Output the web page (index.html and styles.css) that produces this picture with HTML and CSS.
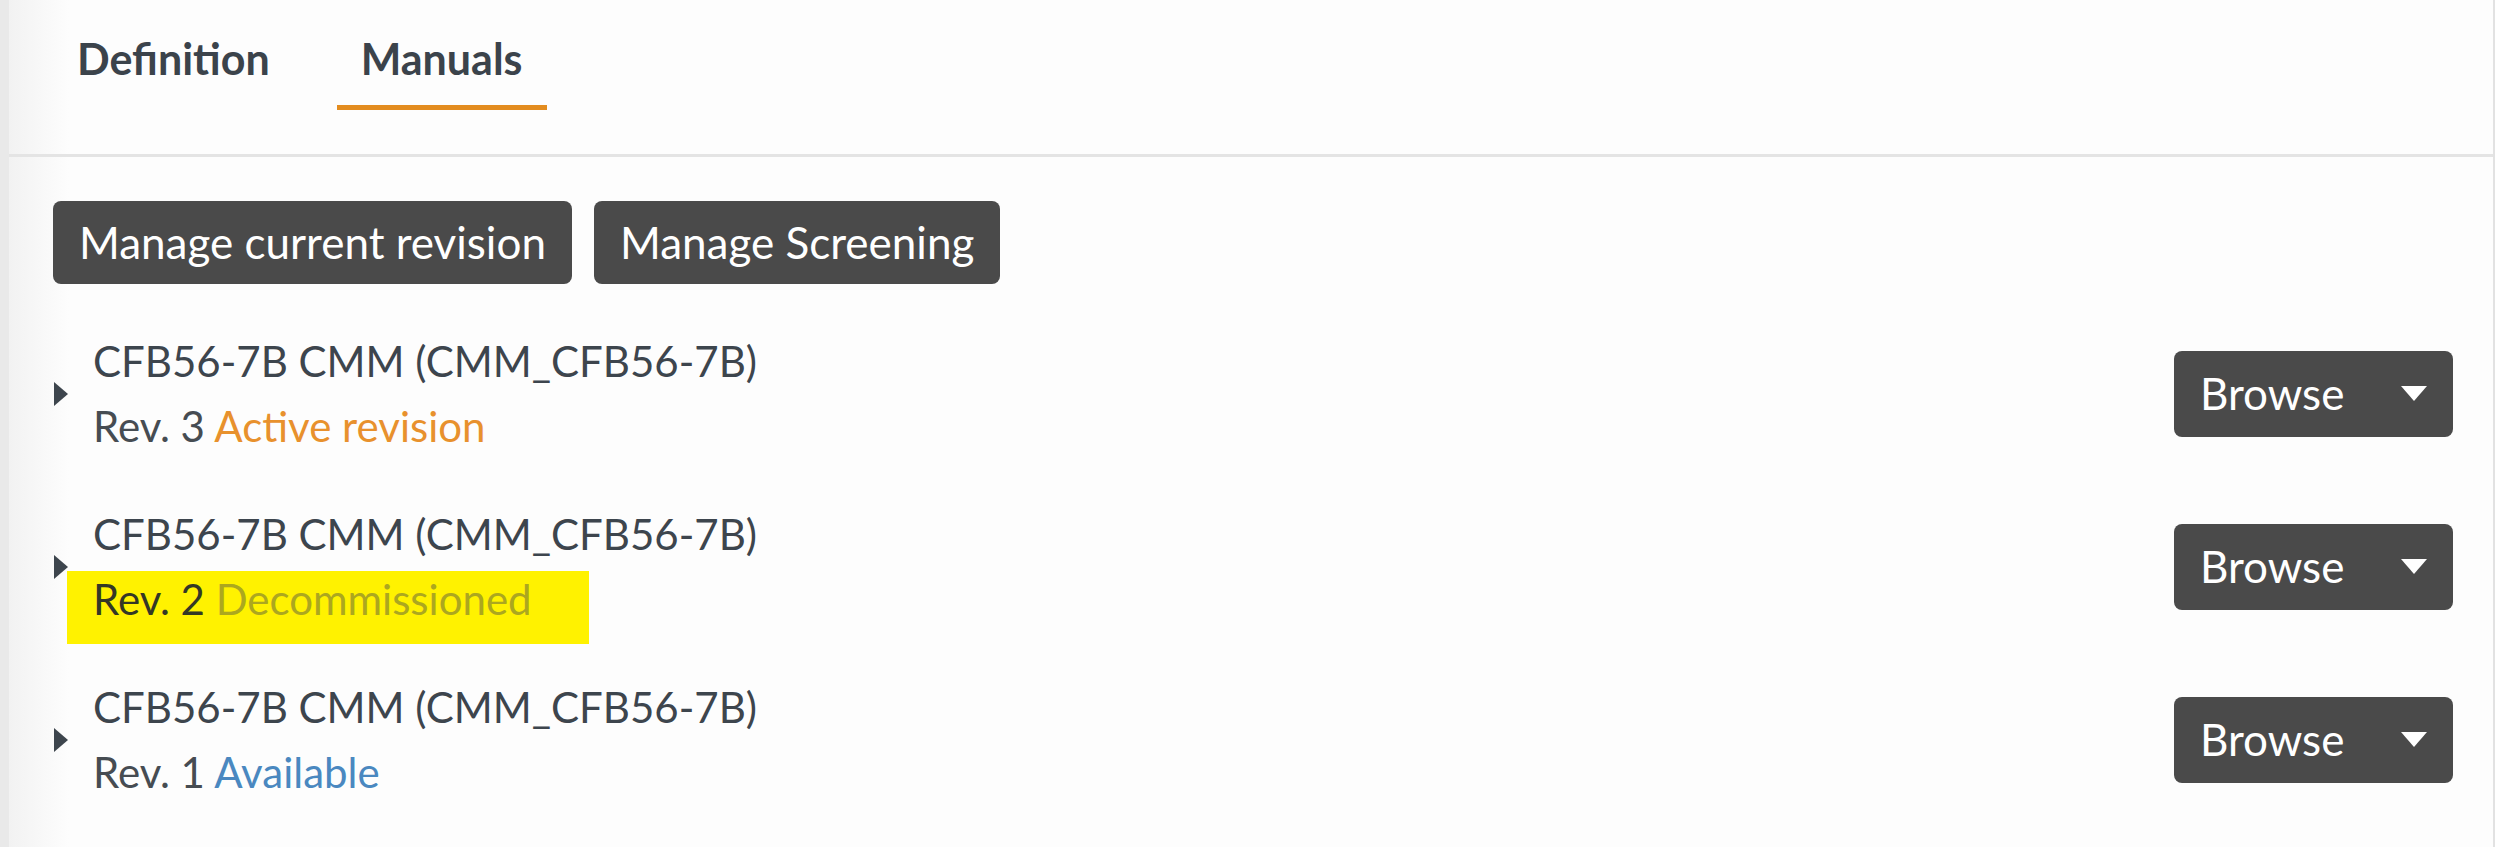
FILE: index.html
```html
<!DOCTYPE html>
<html lang="en">
<head>
    <meta charset="UTF-8">
    <title>Manuals</title>
    <link rel="stylesheet" href="styles.css">
</head>
<body>

    <div class="panel">
        <nav class="tabs">
            <a class="tab" href="#">Definition</a>
            <a class="tab active" href="#">Manuals</a>
        </nav>

        <div class="content">
            <div class="actions">
                <button class="btn">Manage current revision</button>
                <button class="btn">Manage Screening</button>
            </div>

            <ul class="manuals">
                <li class="manual">
                    <span class="toggle"></span>
                    <div class="info">
                        <div class="name">CFB56-7B CMM (CMM_CFB56-7B)</div>
                        <div class="rev">Rev. 3 <span class="status active">Active revision</span></div>
                    </div>
                    <button class="btn browse">Browse <span class="caret"></span></button>
                </li>
                <li class="manual">
                    <span class="toggle"></span>
                    <div class="info">
                        <div class="name">CFB56-7B CMM (CMM_CFB56-7B)</div>
                        <div class="rev marked">Rev. 2 <span class="status decommissioned">Decommissioned</span></div>
                    </div>
                    <button class="btn browse">Browse <span class="caret"></span></button>
                </li>
                <li class="manual">
                    <span class="toggle"></span>
                    <div class="info">
                        <div class="name">CFB56-7B CMM (CMM_CFB56-7B)</div>
                        <div class="rev">Rev. 1 <span class="status available">Available</span></div>
                    </div>
                    <button class="btn browse">Browse <span class="caret"></span></button>
                </li>
            </ul>
        </div>
    </div>

</body>
</html>
```

FILE: styles.css
```css
body {
    margin: 0;
    background: #ffffff;
    font-family: Lato, "Open Sans", sans-serif;
    color: #3d454d;
}
.panel {
    min-height: 100vh;
    margin-right: 5px;
    border-left: 9px solid #e9e9e9;
    border-right: 2px solid #e2e2e2;
    background: linear-gradient(to right, #f2f2f2 0, #fdfdfd 60px);
    box-sizing: border-box;
}

/* tabs */
.tabs {
    display: flex;
    gap: 43px;
    padding: 33px 0 44px 44px;
    border-bottom: 3px solid #e4e4e4;
}
.tab {
    padding: 0 24px 20px;
    border-bottom: 5px solid transparent;
    font-size: 43px;
    font-weight: 700;
    line-height: 52px;
    color: #3b434b;
    text-decoration: none;
}
.tab.active {
    border-bottom-color: #e38c1f;
}

/* buttons */
.content {
    padding: 44px 40px 0 44px;
}
.btn {
    font-family: inherit;
    font-size: 44px;
    line-height: 53px;
    color: #ffffff;
    background: #4a4a4a;
    border: none;
    border-radius: 8px;
    cursor: pointer;
}
.actions {
    display: flex;
    gap: 22px;
}
.actions .btn {
    padding: 15px 26px;
}

/* manual list */
.manuals {
    list-style: none;
    margin: 23px 0 0;
    padding: 0;
}
.manual {
    display: flex;
    align-items: center;
    height: 173px;
}
.toggle {
    width: 0;
    height: 0;
    margin-left: 1px;
    border-left: 14px solid #3d454d;
    border-top: 12.5px solid transparent;
    border-bottom: 12.5px solid transparent;
}
.info {
    flex: 1;
    margin-left: 25px;
    font-size: 42px;
    line-height: 65px;
}
.rev {
    color: #464c52;
}
.status.active {
    color: #e8912d;
}
.status.available {
    color: #4a88c0;
}

/* highlighted revision */
.rev.marked {
    position: relative;
    z-index: 0;
    color: #343826;
}
.rev.marked::before {
    content: "";
    position: absolute;
    left: -26px;
    top: 4px;
    width: 522px;
    height: 73px;
    background: #fff200;
    z-index: -1;
}
.status.decommissioned {
    color: #aca71f;
}

.browse {
    display: flex;
    align-items: center;
    justify-content: space-between;
    width: 279px;
    height: 86px;
    padding: 0 26px;
}
.caret {
    width: 0;
    height: 0;
    border-top: 15px solid #ffffff;
    border-left: 13.5px solid transparent;
    border-right: 13.5px solid transparent;
}
```
